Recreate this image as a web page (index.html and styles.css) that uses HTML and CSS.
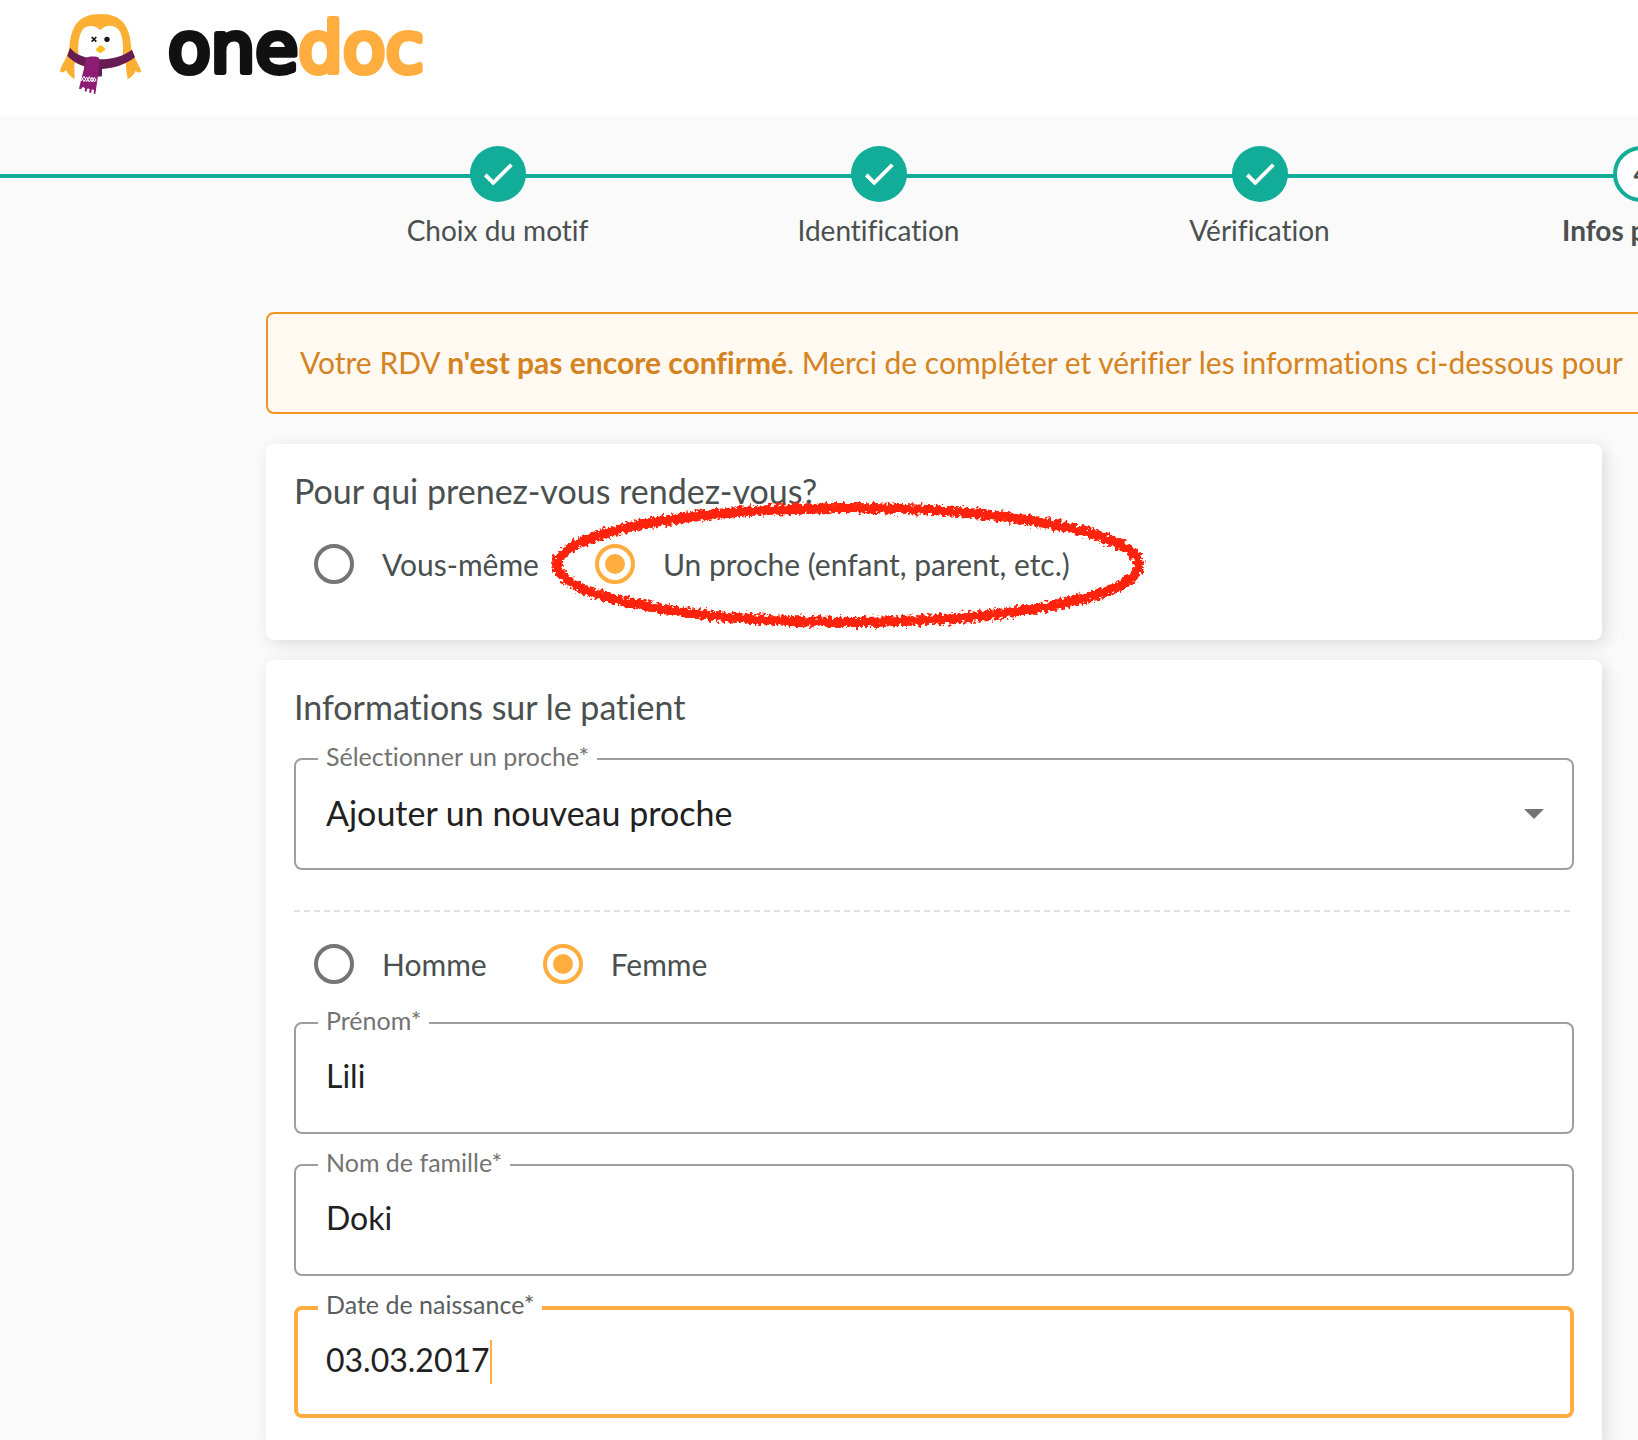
FILE: index.html
```html
<!DOCTYPE html>
<html lang="fr">
<head>
<meta charset="utf-8">
<meta name="viewport" content="width=device-width, initial-scale=1">
<title>OneDoc – Infos patient</title>
<link rel="stylesheet" href="styles.css">
</head>
<body>
<header class="header">
  <a class="brand" href="#" aria-label="onedoc">
    <svg class="brand-bird" viewBox="57 39 252 246" aria-hidden="true">
      <path fill="#fbb034" d="M88 146C92 82 112 42 182 42C250 42 270 82 274 148L284 172C291 188 300 203 304 214C301 220 292 217 287 212C284 222 274 231 263 238C261 222 258 210 258 192L240 170L120 170L103 192L104 238C94 232 84 224 78 211C73 217 65 220 60 214C62 198 74 186 80 168Z"/>
      <path fill="#fff" d="M181 91C198 72 222 74 236 89C249 104 252 150 247 176C236 194 210 200 182 200C152 200 126 194 117 176C112 148 114 106 129 87C142 74 166 74 181 91Z"/>
      <path fill="#661c52" d="M90 143C120 184 220 192 276 149L285 172C262 190 224 206 186 207L186 229L172 230L174 207C140 205 104 192 82 168Z"/>
      <path fill="#8d1c74" d="M137 175C142 168 170 168 177 173C178 204 172 244 166 282L161 281L162 270L156 268L153 279L148 278L149 267L143 265L139 275L134 274L135 264L128 261L123 268L117 266C125 232 133 208 137 175Z"/>
      <path fill="none" stroke="#fff" stroke-width="3" d="M124 231l8 14 8-14 8 15 8-14 7 14 5-9M123 243l9-14 8 16 8-15 8 16 7-14 5 10"/>
      <path fill="#fbbc1c" d="M166 149L178 137Q182 134 186 137L197 148L186 157Q181 161 176 157Z"/>
      <path fill="none" stroke="#161616" stroke-width="5" d="M155 111l14 14M169 111l-14 14"/>
      <circle cx="201" cy="118" r="8" fill="#161616"/>
    </svg>
    <svg class="brand-name" viewBox="0 0 280 84" aria-hidden="true">
      <text class="brand-text" x="1" y="59"><tspan class="brand-one">one</tspan><tspan class="brand-doc">doc</tspan></text>
    </svg>
  </a>
</header>

<nav class="stepper" aria-label="Étapes">
  <ol class="steps">
    <li class="step"><span class="dot"><svg class="check" viewBox="0 0 24 24"><path d="M9 16.170L4.830 12l-1.420 1.410L9 19 21 7l-1.410-1.410z"/></svg></span><span>Choix du motif</span></li>
    <li class="step"><span class="dot"><svg class="check" viewBox="0 0 24 24"><path d="M9 16.170L4.830 12l-1.420 1.410L9 19 21 7l-1.410-1.410z"/></svg></span><span>Identification</span></li>
    <li class="step"><span class="dot"><svg class="check" viewBox="0 0 24 24"><path d="M9 16.170L4.830 12l-1.420 1.410L9 19 21 7l-1.410-1.410z"/></svg></span><span>Vérification</span></li>
    <li class="step step-current" aria-current="step"><span class="dot">4</span><span>Infos patient</span></li>
  </ol>
</nav>

<main class="content">
  <p class="alert">Votre RDV <strong>n'est pas encore confirmé</strong>. Merci de compléter et vérifier les informations ci-dessous pour</p>

  <form class="form">
    <section class="card card-who">
      <h2 class="card-title" id="who">Pour qui prenez-vous rendez-vous?</h2>
      <div class="radios" role="radiogroup" aria-labelledby="who">
        <label class="radio"><input type="radio" name="who">Vous-même</label>
        <label class="radio marked"><input type="radio" name="who" checked>Un proche (enfant, parent, etc.)
          <svg class="marker" viewBox="0 0 612 146" aria-hidden="true">
            <defs>
              <filter id="crayon" x="-5%" y="-15%" width="110%" height="130%">
                <feTurbulence type="fractalNoise" baseFrequency="0.300" numOctaves="2" seed="4" result="n"/>
                <feDisplacementMap in="SourceGraphic" in2="n" scale="10" xChannelSelector="R" yChannelSelector="G"/>
              </filter>
            </defs>
            <ellipse cx="306" cy="73" rx="291" ry="57" filter="url(#crayon)"/>
          </svg>
        </label>
      </div>
    </section>

    <section class="card card-patient">
      <h2 class="card-title">Informations sur le patient</h2>
      <div class="field">
        <label class="field-label" for="proche">Sélectionner un proche*</label>
        <select class="field-control" id="proche"><option>Ajouter un nouveau proche</option></select>
        <svg class="arrow" viewBox="0 0 20 10" aria-hidden="true"><path d="M0 0h20L10 10z"/></svg>
      </div>
      <div class="divider"></div>
      <div class="radios" role="radiogroup" aria-label="Sexe">
        <label class="radio"><input type="radio" name="sexe">Homme</label>
        <label class="radio"><input type="radio" name="sexe" checked>Femme</label>
      </div>
      <div class="fields">
        <div class="field">
          <label class="field-label" for="prenom">Prénom*</label>
          <input class="field-control" id="prenom" type="text" value="Lili">
        </div>
        <div class="field">
          <label class="field-label" for="nom">Nom de famille*</label>
          <input class="field-control" id="nom" type="text" value="Doki">
        </div>
        <div class="field field-active">
          <label class="field-label" for="naissance">Date de naissance*</label>
          <input class="field-control" id="naissance" type="text" value="03.03.2017">
          <span class="caret"></span>
        </div>
      </div>
    </section>
  </form>
</main>
</body>
</html>
```
FILE: styles.css
```css
:root {
  --orange: #ffad3e;
  --teal: #11ad98;
  --ink: #4a4f4f;
  --line: #9e9e9e;
}

* { box-sizing: border-box; }

body {
  margin: 0;
  background: #fafafa;
  color: var(--ink);
  font-family: Lato, "Open Sans", sans-serif;
  font-size: 30px;
  font-variant-ligatures: none;
  line-height: 40px;
  overflow-x: clip;
}

.header {
  height: 116px;
  padding: 13px 59px;
  background: #fff;
}

.brand {
  display: flex;
  gap: 24px;
  align-items: flex-start;
  text-decoration: none;
}

.brand-bird { width: 84px; height: 82px; }
.brand-name { width: 280px; height: 84px; }

.brand-text {
  font-family: "DejaVu Sans", sans-serif;
  font-size: 70px;
  stroke-width: 6px;
  stroke-linejoin: round;
}

.brand-one { fill: #111; stroke: #111; }
.brand-doc { fill: var(--orange); stroke: var(--orange); }

.stepper {
  padding: 30px 0 0 307px;
  background: linear-gradient(var(--teal), var(--teal)) 0 58px / 100% 4px no-repeat;
}

.steps {
  display: grid;
  grid-template-columns: repeat(4, 1fr);
  margin: 0 -193px 0 0;
  padding: 0;
  list-style: none;
}

.step {
  display: flex;
  flex-direction: column;
  align-items: center;
  gap: 8px;
  font-size: 28px;
}

.dot {
  display: grid;
  place-items: center;
  width: 56px;
  height: 56px;
  border-radius: 50%;
  background: var(--teal);
}

.check {
  width: 38px;
  height: 38px;
  fill: #fff;
  stroke: #fff;
  stroke-width: 0.6;
}

.step-current { font-weight: 700; }

.step-current .dot {
  border: 4px solid var(--teal);
  background: #fff;
  font-size: 24px;
}

.content { padding: 62px 0 0 266px; }

.alert {
  margin: 0 -200px 30px 0;
  padding: 28px 32px 30px;
  border: 2px solid #f09422;
  border-radius: 8px;
  background: #fff9f1;
  color: #d4831e;
  white-space: nowrap;
}

.form {
  display: flex;
  flex-direction: column;
  gap: 20px;
  margin-right: 36px;
}

.card {
  padding: 28px;
  border-radius: 8px;
  background: #fff;
  box-shadow: 4px 4px 16px rgba(0, 0, 0, 0.12);
}

.card-who { padding-bottom: 56px; }

.card-title {
  margin: 0 0 32px;
  font-size: 34px;
  font-weight: 400;
  line-height: 38px;
}

.card-who .card-title { margin-bottom: 34px; }

.radios {
  display: flex;
  gap: 56px;
  padding: 0 20px;
}

.radio {
  display: flex;
  gap: 28px;
  align-items: center;
}

.radio input {
  appearance: none;
  display: grid;
  place-items: center;
  width: 40px;
  height: 40px;
  margin: 0;
  border: 4px solid #757575;
  border-radius: 50%;
}

.radio input:checked { border-color: var(--orange); }

.radio input:checked::before {
  content: "";
  width: 20px;
  height: 20px;
  border-radius: 50%;
  background: var(--orange);
}

.marked { position: relative; }

.marker {
  position: absolute;
  top: -52px;
  left: -53px;
  width: 612px;
  height: 146px;
  fill: none;
  stroke: #ff2408;
  stroke-width: 10px;
  pointer-events: none;
}

.field {
  position: relative;
  display: flex;
  align-items: center;
  height: 112px;
  padding: 0 28px 0 30px;
  border: 2px solid var(--line);
  border-radius: 8px;
}

.field-label {
  position: absolute;
  top: -20px;
  left: 22px;
  padding: 0 8px;
  background: #fff;
  color: #737373;
  font-size: 25px;
  line-height: 32px;
}

.field-control {
  flex: 1;
  min-width: 0;
  height: 44px;
  padding: 0 0 6px;
  border: 0;
  outline: 0;
  background: none;
  color: #212121;
  appearance: none;
  font: inherit;
  font-size: 32px;
}

select.field-control {
  padding-bottom: 2px;
  font-size: 34px;
}

.arrow { width: 20px; height: 10px; fill: #757575; }

.field-active {
  padding: 0 28px;
  border: 4px solid var(--orange);
}

.field-active .field-label { top: -22px; left: 20px; color: #5a5e5e; }
.field-active .field-control { flex: none; field-sizing: content; }

.caret { width: 2px; height: 44px; background: var(--orange); }

.divider {
  height: 2px;
  margin: 40px 0 32px;
  background: repeating-linear-gradient(90deg, #e0e0e0 0 6px, transparent 6px 10px);
}

.fields {
  display: grid;
  gap: 30px;
  margin-top: 38px;
}
```
